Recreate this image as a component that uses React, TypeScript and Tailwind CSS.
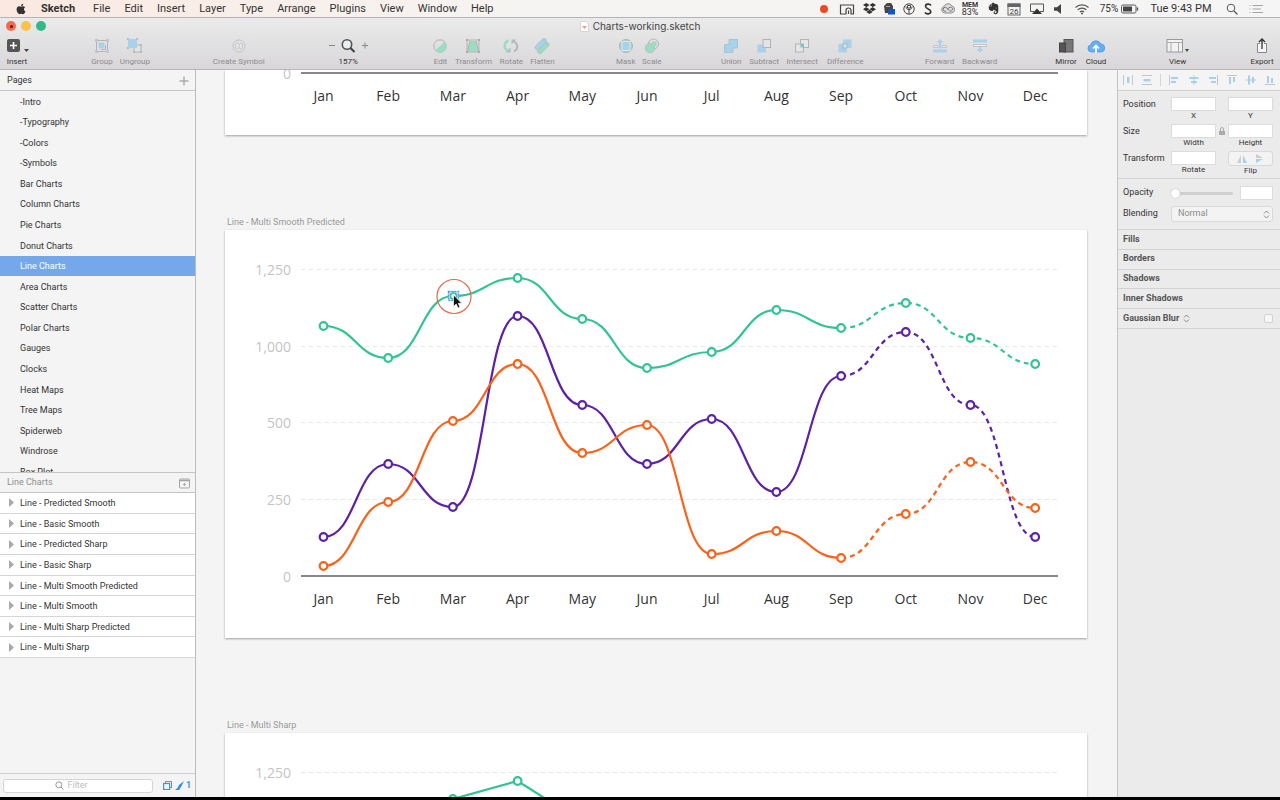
import { Fragment, type ReactNode } from "react";
import { FaApple, FaDropbox, FaEvernote } from "react-icons/fa";

const menus = ["File", "Edit", "Insert", "Layer", "Type", "Arrange", "Plugins", "View", "Window", "Help"];

const pages = [
  "-Intro", "-Typography", "-Colors", "-Symbols", "Bar Charts", "Column Charts", "Pie Charts",
  "Donut Charts", "Line Charts", "Area Charts", "Scatter Charts", "Polar Charts", "Gauges",
  "Clocks", "Heat Maps", "Tree Maps", "Spiderweb", "Windrose", "Box Plot",
];

const layers = [
  "Line - Predicted Smooth", "Line - Basic Smooth", "Line - Predicted Sharp", "Line - Basic Sharp",
  "Line - Multi Smooth Predicted", "Line - Multi Smooth", "Line - Multi Sharp Predicted", "Line - Multi Sharp",
];

const months = ["Jan", "Feb", "Mar", "Apr", "May", "Jun", "Jul", "Aug", "Sep", "Oct", "Nov", "Dec"];

const gridLines = [
  { label: "1,250", y: 40 },
  { label: "1,000", y: 117 },
  { label: "500", y: 193 },
  { label: "250", y: 270 },
];

const series = [
  { color: "#5b21a6", ys: [307, 234, 277, 86, 175, 234, 189, 262, 146, 102, 175, 307] },
  { color: "#fb6118", ys: [336, 272, 191, 134, 223, 195, 324, 301, 328, 284, 232, 278] },
  { color: "#30c493", ys: [96, 128, 66, 48, 89, 138, 122, 80, 98, 73, 108, 134] },
];

const monthX = (i: number) => 98.5 + i * 64.7;

// index of the last measured month, everything after it is predicted
const LAST = 8;

function linePath(ys: number[], from: number, to: number, smooth: boolean) {
  let d = `M${monthX(from)} ${ys[from]}`;
  for (let i = from + 1; i <= to; i++) {
    const mid = (monthX(i - 1) + monthX(i)) / 2;
    d += smooth
      ? ` C${mid} ${ys[i - 1]} ${mid} ${ys[i]} ${monthX(i)} ${ys[i]}`
      : ` L${monthX(i)} ${ys[i]}`;
  }
  return d;
}

type ChartProps = { smooth?: boolean; predicted?: boolean; children?: ReactNode };

function ChartAxis() {
  return (
    <>
      <text x="66" y="352" textAnchor="end" fill="#c4c4c4">0</text>
      <line x1="76" x2="833" y1="346" y2="346" stroke="#625f63" strokeWidth="1.6" />
      {months.map((m, i) => (
        <text key={m} x={monthX(i)} y="374" textAnchor="middle" fill="#333">{m}</text>
      ))}
    </>
  );
}

function LineChart({ smooth = false, predicted = false, children }: ChartProps) {
  const solidEnd = predicted ? LAST : 11;
  return (
    <svg viewBox="0 0 862 408" className="block h-auto w-full shrink-0 bg-white font-['Open_Sans',sans-serif] text-[14px] shadow-[0_1px_2px_rgba(0,0,0,0.35)]">
      {gridLines.map((g) => (
        <Fragment key={g.label}>
          <text x="66" y={g.y + 5} textAnchor="end" fill="#c4c4c4">{g.label}</text>
          <line x1="76" x2="833" y1={g.y - 0.5} y2={g.y - 0.5} stroke="#e8e8e8" strokeDasharray="4 4" />
        </Fragment>
      ))}
      <ChartAxis />
      {series.map((s) => (
        <g key={s.color} fill="none" stroke={s.color} strokeWidth="2.2">
          <path d={linePath(s.ys, 0, solidEnd, smooth)} />
          {predicted && <path d={linePath(s.ys, LAST, 11, smooth)} strokeDasharray="5 4" />}
          {s.ys.map((y, i) => <circle key={i} cx={monthX(i)} cy={y} r="3.8" fill="#fff" />)}
        </g>
      ))}
      {children}
    </svg>
  );
}

function Icon({ children, w = 16 }: { children: ReactNode; w?: number }) {
  return (
    <svg width={w} height="16" viewBox={`0 0 ${w} 16`} fill="none" aria-hidden="true" className="shrink-0">
      {children}
    </svg>
  );
}

function Tool({ label, icon, width, dark = false }: { label: string; icon: ReactNode; width: string; dark?: boolean }) {
  return (
    <button className={`flex shrink-0 flex-col items-center gap-[3px] whitespace-nowrap ${width} ${dark ? "text-[#333]" : "text-[#8d8b8d]"}`}>
      {icon}
      <span className="leading-[10px]">{label}</span>
    </button>
  );
}

const NarrowSpacer = () => <div className="flex-[1_1_47px]" />;
const Spacer = () => <div className="flex-[1_1_52px]" />;
const WideSpacer = () => <div className="flex-[1_1_58px]" />;

function MenuBar() {
  return (
    <nav className="flex h-[18px] shrink-0 items-center border-b border-[#b5b3b5] bg-linear-to-r from-[#fbe9e1] via-[#f6f4f2] via-40% to-[#f5f5f5] text-[11px] text-[#333]">
      <div className="flex items-center gap-3.5 pt-px pl-[15px] leading-4">
        <FaApple className="size-3" />
        <a href="#" className="mr-1 font-bold">Sketch</a>
        {menus.map((m) => <a key={m} href="#">{m}</a>)}
      </div>
      <div className="ml-auto flex items-center pr-[11px] leading-4 *:flex *:shrink-0 *:justify-center">
        <div className="w-[22px]"><i className="size-2 rounded-full bg-[#f2481d]" /></div>
        <div className="w-6">
          <Icon><path d="M4.500 13H1.500V4h13v9h-2.500V9.500a2.500 2.500 0 0 0-5 0V13H4.500M9.500 13V9.500" stroke="#444" strokeWidth="1.200" /></Icon>
        </div>
        <div className="w-5"><FaDropbox className="size-[13px]" /></div>
        <div className="w-5">
          <Icon>
            <path d="M3 5l3-3h4l2 3v7H4z" fill="#444" />
            <path d="M5 5.500h4" stroke="#aaa" />
            <rect x="7" y="8" width="7" height="5.500" fill="#1155c4" />
          </Icon>
        </div>
        <div className="w-5">
          <Icon>
            <circle cx="8" cy="8" r="5.200" stroke="#444" />
            <path d="M8 13V8M5 5.500c0 2 1.200 3 3 3s3-1 3-3M6.500 4.500h3v2.500h-3z" stroke="#444" />
          </Icon>
        </div>
        <div className="w-[18px]">
          <Icon><path d="M11 4.500C10 2.500 5.500 2.500 5.500 5.300c0 3 5.300 2.200 5.300 5.200 0 3-4.800 3-5.800.800" stroke="#333" strokeWidth="1.600" /></Icon>
        </div>
        <div className="w-[22px]">
          <Icon>
            <path d="M4.500 12A3.500 3.500 0 0 1 4 5.300 4.500 4.500 0 0 1 12 5a3.600 3.600 0 0 1-.500 7z" stroke="#8a8a8a" fill="#ddd" />
            <path d="M9.500 9.500 6.500 6.800a2 2 0 1 0-.300 3.200M7.500 8l1.500-1.200a2 2 0 1 1 .800 3.200" stroke="#777" />
          </Icon>
        </div>
        <div className="w-[22px] flex-col items-center text-[9px] leading-[7px]">
          <span className="text-[7px] leading-[7px] font-bold">MEM</span>
          <span>83%</span>
        </div>
        <div className="w-6"><FaEvernote className="size-[13px]" /></div>
        <div className="w-[18px]">
          <Icon>
            <rect x="2" y="3" width="12" height="11" stroke="#666" fill="#f3f3f3" />
            <path d="M1.500 2.500h13V6h-13z" fill="#666" />
            <text x="8" y="13" textAnchor="middle" fontSize="8" fill="#444">26</text>
          </Icon>
        </div>
        <div className="w-7">
          <Icon>
            <path d="M5 10.500H1.500V3h13v7.500H11" stroke="#555" />
            <path d="m8 7.500 5 5.500H3z" fill="#333" />
          </Icon>
        </div>
        <div className="w-3.5"><Icon><path d="M4 6.200h3L11 3v10L7 9.800H4z" fill="#444" /></Icon></div>
        <div className="w-[34px]">
          <Icon>
            <path d="M1.500 6.500a9.500 9.500 0 0 1 13 0M3.700 8.800a6.300 6.300 0 0 1 8.600 0M5.900 11a3.200 3.200 0 0 1 4.200 0" stroke="#555" strokeWidth="1.200" />
            <circle cx="8" cy="12.500" r="1" fill="#555" />
          </Icon>
        </div>
        <span className="w-5 pt-px text-[10px]">75%</span>
        <div className="w-[22px]">
          <Icon w={18}>
            <rect x="0.500" y="4" width="14.500" height="8" rx="1.500" stroke="#555" />
            <path d="M2 5.500h9v5H2z" fill="#444" />
            <path d="M16.500 6.500v3" stroke="#555" strokeWidth="1.300" />
          </Icon>
        </div>
        <span className="w-20 pt-px">Tue 9:43 PM</span>
        <div className="w-[22px]">
          <Icon><circle cx="7" cy="7" r="3.800" stroke="#555" /><path d="m10 10 3.500 3.500" stroke="#555" strokeWidth="1.200" /></Icon>
        </div>
        <div className="w-[26px]">
          <Icon><path d="M4.500 4.500H15M4.500 8H13M4.500 11.500H15M1.500 4.500h1M1.500 8h1M1.500 11.500h1" stroke="#a5a5a5" /></Icon>
        </div>
      </div>
    </nav>
  );
}

const BLUE = "#a9d1ea";
const GREEN = "#9bdcc2";
const EDGE = "#b4b2b4";

function Toolbar() {
  return (
    <div className="flex h-[34px] shrink-0 items-start border-b border-[#b9b7b9] pt-0.5 text-[8px]">
      <Tool dark width="w-[34px]" label="Insert" icon={
        <Icon w={28}>
          <rect x="4" y="1" width="13" height="13" rx="2" fill="#555" />
          <path d="M10.500 4v7M7 7.500h7" stroke="#fff" strokeWidth="1.600" />
          <path d="m21 11 2.500 3 2.500-3z" fill="#444" />
        </Icon>
      } />
      <Spacer />
      <Tool width="w-[33px]" label="Group" icon={
        <Icon>
          <rect x="2.500" y="2.500" width="11" height="11" stroke={EDGE} fill="#e4e2e4" />
          <rect x="4.500" y="4.500" width="6" height="6" fill={BLUE} />
          <path d="M11.500 7v4.500H7" stroke={EDGE} />
          <path d="M1 1h3v3H1zM12 1h3v3h-3zM1 12h3v3H1zM12 12h3v3h-3z" fill="#c7c5c7" />
        </Icon>
      } />
      <Tool width="w-[33px]" label="Ungroup" icon={
        <Icon>
          <path d="M7 7h7v7H7z" stroke={EDGE} fill="#e4e2e4" />
          <path d="M0 0h2v2H0zM9 0h2v2H9zM0 9h2v2H0zM13 6h2v2h-2zM6 13h2v2H6zM13 13h2v2h-2z" fill="#b5b9bd" />
          <rect x="1" y="1" width="9" height="9" fill={BLUE} />
        </Icon>
      } />
      <WideSpacer />
      <Tool width="w-[60px]" label="Create Symbol" icon={
        <Icon>
          <circle cx="8" cy="8" r="6" stroke="#c2c0c2" fill="#e6e4e6" />
          <path d="M7 4.500a3.600 3.600 0 0 0 0 7M9 4.500a3.600 3.600 0 0 1 0 7M8 5v6" stroke="#c2c0c2" />
        </Icon>
      } />
      <WideSpacer />
      <Tool dark width="w-11" label="157%" icon={
        <Icon w={42}>
          <path d="M2 7.500h6M35 7.500h6M38 4.500v6" stroke="#888" />
          <circle cx="20" cy="6.500" r="4.700" stroke="#555" strokeWidth="1.600" fill="#eceff1" />
          <path d="m23.500 10 4 4" stroke="#444" strokeWidth="2.200" />
        </Icon>
      } />
      <WideSpacer />
      <Tool width="w-[26px]" label="Edit" icon={
        <Icon>
          <circle cx="8" cy="8" r="6.200" stroke={EDGE} />
          <path d="M12.700 3.300A6.500 6.500 0 1 1 3.300 12.700z" fill={GREEN} />
        </Icon>
      } />
      <Tool width="w-10" label="Transform" icon={
        <Icon>
          <path d="M4.500 3h7L14 13.500H2z" fill={GREEN} />
          <path d="M2 2v12h12V2z M5 3 2.500 13M11 3l2.500 10" stroke={EDGE} />
          <path d="M1 1h2v2H1zM13 1h2v2h-2zM1 13h2v2H1zM13 13h2v2h-2z" fill="#a9adab" />
        </Icon>
      } />
      <Tool width="w-9" label="Rotate" icon={
        <Icon w={18}>
          <path d="M6.500 2.500C1.500 4.500 1.500 10 5.500 12.500" stroke={GREEN} strokeWidth="2.500" />
          <path d="M11.500 3.500c5 2 5 7.500.500 10" stroke={EDGE} strokeWidth="1.800" />
          <path d="M3.500 14.500h5v-5zM14.500 1.500h-5v5z" fill="#aac2b8" />
        </Icon>
      } />
      <Tool width="w-[26px]" label="Flatten" icon={
        <Icon>
          <g transform="rotate(-45 8 8)">
            <rect x="1.500" y="3.500" width="14" height="4.500" rx="2.200" fill={BLUE} stroke="#a9bcc4" strokeWidth="0.700" />
            <rect x="0.500" y="8" width="14" height="4.500" rx="2.200" fill={GREEN} stroke="#a9bcb4" strokeWidth="0.700" />
          </g>
        </Icon>
      } />
      <WideSpacer />
      <Tool width="w-[26px]" label="Mask" icon={
        <Icon>
          <circle cx="8" cy="8" r="6.500" fill={GREEN} stroke={EDGE} />
          <rect x="4" y="3.500" width="8" height="9" fill={BLUE} stroke="#dce7ee" />
        </Icon>
      } />
      <Tool width="w-[26px]" label="Scale" icon={
        <Icon>
          <circle cx="9.500" cy="6" r="5" stroke={EDGE} />
          <circle cx="6" cy="10" r="4.800" fill={GREEN} stroke={EDGE} strokeWidth="0.600" />
          <path d="M5 11 11 5M8 4.500h3.500V8" stroke={GREEN} strokeWidth="2" />
        </Icon>
      } />
      <Spacer />
      <Tool width="w-[30px]" label="Union" icon={
        <Icon><path d="M1.500 6.500H6v-5h8.500V10H10v4.500H1.500z" fill={BLUE} stroke="#9cbfd4" strokeWidth="0.800" /></Icon>
      } />
      <Tool width="w-9" label="Subtract" icon={
        <Icon>
          <path d="M1.500 6.500H7v3.500h3v4.500H1.500z" fill={BLUE} />
          <rect x="7" y="1.500" width="7.500" height="8" fill="#e4e4e6" stroke={EDGE} />
        </Icon>
      } />
      <Tool width="w-10" label="Intersect" icon={
        <Icon>
          <rect x="6.500" y="1.500" width="8" height="8" fill="#e6e6e6" stroke={EDGE} />
          <rect x="1.500" y="6" width="8" height="8" fill="#e6e6e6" stroke={EDGE} />
          <rect x="6.500" y="6" width="3.500" height="3.500" fill="#7ebfd0" />
        </Icon>
      } />
      <Tool width="w-[46px]" label="Difference" icon={
        <Icon>
          <rect x="6" y="1.500" width="8.500" height="8.500" fill={BLUE} />
          <rect x="1.500" y="6" width="8.500" height="8.500" fill={BLUE} />
          <rect x="6" y="6" width="4" height="4" fill="#e0e4e6" stroke="#9dbccb" />
        </Icon>
      } />
      <Spacer />
      <Tool width="w-10" label="Forward" icon={
        <Icon>
          <path d="M8 1 4.500 4.500H7v6h2v-6h2.500z" fill={BLUE} />
          <path d="M1.500 7.500H6v2H1.500zM10 7.500h4.500v2H10z" fill="#f0f0f0" stroke={EDGE} strokeWidth="0.700" />
          <path d="M1 11.500h14v3H1z" fill={BLUE} />
        </Icon>
      } />
      <Tool width="w-10" label="Backward" icon={
        <Icon>
          <path d="M1 1.500h14v3H1z" fill={BLUE} />
          <path d="M1.500 6.500h13v2h-13z" fill="#f0f0f0" stroke={EDGE} strokeWidth="0.700" />
          <path d="M8 14.500 4.500 11H7V9h2v2h2.500z" fill={BLUE} />
        </Icon>
      } />
      <Spacer />
      <Tool dark width="w-[30px]" label="Mirror" icon={
        <Icon>
          <rect x="6" y="1.500" width="9" height="12.500" fill="#777" stroke="#555" />
          <rect x="1.500" y="5" width="6" height="9" fill="#555" stroke="#444" />
        </Icon>
      } />
      <Tool dark width="w-[30px]" label="Cloud" icon={
        <Icon w={18}>
          <path d="M4.500 14a3.700 3.700 0 0 1-.700-7.300A5.300 5.300 0 0 1 13.800 6 4 4 0 0 1 13.500 14z" fill="#64aff6" stroke="#4c8fe0" strokeWidth="0.700" />
          <path d="M9 15V8M6 10.500l3-3 3 3" stroke="#fff" strokeWidth="1.700" />
        </Icon>
      } />
      <NarrowSpacer />
      <Tool dark width="w-10" label="View" icon={
        <Icon w={24}>
          <rect x="1" y="1.500" width="15.500" height="12.500" fill="#f2f2f2" stroke="#999" />
          <path d="M1 4.500h15.500M5 4.500V14M12.500 4.500V14" stroke="#aaa" />
          <path d="m19 11 2 3 2-3z" fill="#444" />
        </Icon>
      } />
      <NarrowSpacer />
      <Tool dark width="w-9" label="Export" icon={
        <Icon>
          <path d="M6 5.500H3.500v9h9v-9H10" fill="#f5f5f5" stroke="#888" />
          <path d="M8 11V1M5 4l3-3 3 3" stroke="#333" strokeWidth="1.300" />
        </Icon>
      } />
    </div>
  );
}

function Sidebar() {
  return (
    <aside className="flex w-[196px] shrink-0 flex-col border-r border-[#bcbcbc] bg-[#f4f4f4] text-[9px] text-[#333]">
      <header className="flex h-[21px] shrink-0 items-center justify-between border-b border-[#c8c8c8] pt-px pr-[6px] pl-[7px]">
        <h2>Pages</h2>
        <button aria-label="Add page">
          <svg width="10" height="10" className="block"><path d="M5 0.500v9M0.500 5h9" stroke="#aaa" strokeWidth="1.400" /></svg>
        </button>
      </header>
      <div className="h-[381px] overflow-hidden">
        <ul className="grid h-[391px] auto-rows-fr">
          {pages.map((p) => (
            <li key={p} className={`flex items-center pt-0.5 pl-5 ${p === "Line Charts" ? "bg-[#74a8ea] text-white" : ""}`}>{p}</li>
          ))}
        </ul>
      </div>
      <header className="flex h-[21px] shrink-0 items-center justify-between border-y border-[#c4c4c4] pt-px pr-[5px] pl-[7px] text-[#8f8f8f]">
        <h2>Line Charts</h2>
        <button aria-label="Collapse layers">
          <svg width="11" height="11" className="block" fill="none">
            <rect x="0.500" y="1" width="10" height="9" rx="1" stroke="#a5a5a5" />
            <path d="M0.500 2.500h10" stroke="#a5a5a5" strokeWidth="1.500" />
            <path d="M5.500 5v3M4 6.500h3" stroke="#aaa" />
          </svg>
        </button>
      </header>
      <ul className="grid h-[165px] shrink-0 auto-rows-fr bg-white">
        {layers.map((l) => (
          <li key={l} className="flex items-center gap-1.5 border-b border-[#d6d6d6] pt-0.5 pl-[9px]">
            <svg width="5" height="9" className="mb-0.5"><path d="M0 0v9l5-4.500z" fill="#a9a9a9" /></svg>
            {l}
          </li>
        ))}
      </ul>
      <footer className="mt-auto flex h-6 shrink-0 items-center border-t border-[#cfcfcf] pl-[3px]">
        <label className="flex h-[14px] w-[150px] items-center justify-center gap-1 rounded-[3px] border border-[#d5d5d5] bg-white">
          <svg width="9" height="9" fill="none"><circle cx="3.800" cy="3.800" r="3" stroke="#999" /><path d="m6 6 2.500 2.500" stroke="#999" /></svg>
          <input aria-label="Filter layers" placeholder="Filter" className="w-[34px] text-[9px] outline-none placeholder:text-[#bdbdbd]" />
        </label>
        <button aria-label="Show slices" className="ml-2.5">
          <svg width="9" height="9" fill="none" className="block">
            <path d="M2.500 2V.600h6v6H7" stroke="#3d96ea" />
            <rect x="0.600" y="2.500" width="6" height="6" stroke="#3d96ea" strokeWidth="1.200" />
          </svg>
        </button>
        <button className="ml-[3px] flex items-center gap-0.5 text-[9px] font-bold text-[#3d96ea]">
          <svg width="9" height="9"><path d="M9 0 4 4 2.500 7 0 9h4l2-3z" fill="#2f8eea" /></svg>
          1
        </button>
      </footer>
    </aside>
  );
}

const Artboard = ({ title, children }: { title: string; children: ReactNode }) => (
  <section className="shrink-0">
    <h3 className="mb-0.5 pl-0.5 text-[9px] leading-[12px] text-[#999]">{title}</h3>
    {children}
  </section>
);

function Canvas() {
  return (
    <main className="flex min-w-0 flex-1 flex-col overflow-hidden bg-[#f4f4f4] pr-[30px] pl-[29px]">
      {/* only the foot of the first artboard is scrolled into view */}
      <svg viewBox="0 343 862 65" className="block h-auto w-full shrink-0 bg-white font-['Open_Sans',sans-serif] text-[14px] shadow-[0_1px_2px_rgba(0,0,0,0.35)]">
        <ChartAxis />
      </svg>
      <div className="flex flex-col gap-[81px] pt-[81px]">
        <Artboard title="Line - Multi Smooth Predicted">
          <LineChart smooth predicted>
            <rect x="223.500" y="61.500" width="10" height="9" fill="#cfe4fb" stroke="#4f9bf0" strokeWidth="1.500" strokeDasharray="2 1" />
            <circle cx="228.500" cy="66" r="3" fill="#fff" stroke="#30c493" strokeWidth="1.500" />
            <circle cx="229" cy="66.500" r="17" fill="none" stroke="#e2694d" strokeWidth="1.200" />
            <path d="M228.500 65v11.500l2.700-2.500 1.800 4 2-1-1.800-3.700h3.600z" fill="#111" stroke="#fff" strokeWidth="0.700" />
          </LineChart>
        </Artboard>
        <Artboard title="Line - Multi Sharp">
          <LineChart />
        </Artboard>
      </div>
    </main>
  );
}

// alignment glyphs: grey guide line plus blue bars
const alignIcons = [
  { name: "Distribute horizontally", line: "M1.500 1v10M10.500 1v10", bar: "M5 3h2.500v6H5z" },
  { name: "Distribute vertically", line: "M1 1.500h10M1 10.500h10", bar: "M2.500 5h7v2.500h-7z" },
  { name: "Align left", line: "M1.500 1v10", bar: "M3 3h7v2H3zM3 7h5v2H3z" },
  { name: "Align center", line: "M6 1v10", bar: "M1.500 3h9v2h-9zM3 7h6v2H3z" },
  { name: "Align right", line: "M10.500 1v10", bar: "M2 3h7v2H2zM4 7h5v2H4z" },
  { name: "Align top", line: "M1 1.500h10", bar: "M3 3h2v7H3zM7 3h2v5H7z" },
  { name: "Align middle", line: "M1 6h10", bar: "M3 1.500h2v9H3zM7 3h2v6H7z" },
  { name: "Align bottom", line: "M1 10.500h10", bar: "M3 2h2v7H3zM7 4h2v5H7z" },
];

function Field({ label }: { label: string }) {
  return (
    <label className="flex flex-col items-center text-[8px] leading-[10px]">
      <input className="h-[14px] w-full border border-[#dcdcdc] bg-white px-1 outline-none" />
      {label}
    </label>
  );
}

const Stepper = () => (
  <svg width="7" height="9" fill="none" className="shrink-0">
    <path d="m1 3.500 2.500-2.500L6 3.500M1 5.500 3.500 8 6 5.500" stroke="#888" />
  </svg>
);

function Inspector() {
  return (
    <aside className="w-[163px] shrink-0 border-l border-[#c4c4c4] bg-[#ebebeb] text-[9px] text-[#333]">
      <div className="flex h-[21px] items-center justify-between border-b border-[#cfcfcf] bg-[#f4f4f4] px-1">
        {alignIcons.map((a, i) => (
          <Fragment key={a.name}>
            {i === 2 && <i className="h-3 w-px bg-[#d5d5d5]" />}
            <button aria-label={a.name}>
              <svg width="12" height="12" className="block">
                <path d={a.line} stroke="#c2c6c9" />
                <path d={a.bar} fill="#a6d0ec" />
              </svg>
            </button>
          </Fragment>
        ))}
      </div>
      <div className="flex flex-col gap-[3px] border-b border-[#d2d2d2] pt-1.5 pr-[7px] pb-0.5 pl-[5px] *:grid *:grid-cols-[48px_1fr_12px_1fr] *:leading-[15px]">
        <div>
          <span>Position</span>
          <Field label="X" />
          <span />
          <Field label="Y" />
        </div>
        <div>
          <span>Size</span>
          <Field label="Width" />
          <button aria-label="Lock proportions" className="flex h-[14px] items-center justify-center">
            <svg width="6" height="8" fill="none"><path d="M1.500 4V2a1.500 1.500 0 0 1 3 0v2" stroke="#aaa" /><path d="M0 4h6v4H0z" fill="#aaa" /></svg>
          </button>
          <Field label="Height" />
        </div>
        <div>
          <span>Transform</span>
          <Field label="Rotate" />
          <span />
          <div className="flex flex-col items-center text-[8px] leading-[10px]">
            <div className="flex h-[15px] w-full items-center justify-evenly rounded-[3px] border border-[#d8d8d8] bg-[#f3f3f3]">
              <button aria-label="Flip horizontally">
                <svg width="10" height="8" className="block"><path d="M4 0v8H0z" fill="#cdcdcd" /><path d="M6 0v8h4z" fill="#a6d0ec" /></svg>
              </button>
              <button aria-label="Flip vertically">
                <svg width="9" height="9" className="block"><path d="M1 0v4h7z" fill="#cdcdcd" /><path d="M1 9V5h7z" fill="#a6d0ec" /></svg>
              </button>
            </div>
            Flip
          </div>
        </div>
      </div>
      <div className="flex flex-col gap-1.5 border-b border-[#d2d2d2] pt-[7px] pr-[7px] pb-[7px] pl-[5px]">
        <div className="flex h-[14px] items-center">
          <label htmlFor="opacity" className="w-12">Opacity</label>
          <input id="opacity" type="range" defaultValue="0" className="h-3 w-[62px] appearance-none bg-transparent [&::-webkit-slider-runnable-track]:h-[3px] [&::-webkit-slider-runnable-track]:rounded-full [&::-webkit-slider-runnable-track]:bg-[#d0d0d0] [&::-webkit-slider-thumb]:mt-[-3px] [&::-webkit-slider-thumb]:size-[9px] [&::-webkit-slider-thumb]:appearance-none [&::-webkit-slider-thumb]:rounded-full [&::-webkit-slider-thumb]:bg-white [&::-webkit-slider-thumb]:shadow-[0_0_1px_rgba(0,0,0,0.4)]" />
          <input aria-label="Opacity value" className="ml-auto h-[14px] w-[33px] border border-[#dcdcdc] bg-white px-1" />
        </div>
        <div className="flex h-4 items-center">
          <label htmlFor="blending" className="w-12">Blending</label>
          <div className="flex h-4 flex-1 items-center rounded-[3px] border border-[#d9d9d9] bg-[#f3f3f3] pr-0.5 pl-1.5">
            <select id="blending" className="flex-1 appearance-none text-[#8c8c8c]">
              <option>Normal</option>
            </select>
            <Stepper />
          </div>
        </div>
      </div>
      <div className="grid h-[99px] auto-rows-fr font-bold text-[#555] *:flex *:items-center *:border-b *:border-[#d2d2d2] *:pl-[5px]">
        <h3>Fills</h3>
        <h3>Borders</h3>
        <h3>Shadows</h3>
        <h3>Inner Shadows</h3>
        <label className="gap-1 pr-[7px]">
          Gaussian Blur
          <Stepper />
          <input type="checkbox" className="ml-auto size-[9px] appearance-none rounded-[2px] border border-[#d2d2d2] bg-[#f6f6f6]" />
        </label>
      </div>
    </aside>
  );
}

function App() {
  return (
    <div className="flex h-screen flex-col overflow-hidden border-b-[3px] border-black bg-[#f4f4f4] font-[Roboto,sans-serif]">
      <MenuBar />
      <div className="flex shrink-0 flex-col bg-linear-to-b from-[#ebebeb] to-[#d8d6d9]">
        <div className="flex h-[18px] items-center justify-between px-1.5 pb-0.5 text-[#444]">
          <div className="flex w-20 gap-[5px]">
            <button aria-label="Close" className="flex size-[10px] items-center justify-center rounded-full bg-[#f26b50]"><i className="size-[3px] rounded-full bg-[#5c1b10]" /></button>
            <button aria-label="Minimize" className="size-[10px] rounded-full bg-[#fbc14a]" />
            <button aria-label="Zoom" className="size-[10px] rounded-full bg-[#33b888]" />
          </div>
          <h1 className="flex items-center gap-1 font-[Inter,sans-serif] text-[10px]">
            <svg width="9" height="11"><path d="M.500.500h5.500l2.500 2.500v7.500h-8z" fill="#fff" stroke="#d6d6d6" /><path d="M2 5h5L4.500 8z" fill="#f39a7c" /></svg>
            Charts-working.sketch
          </h1>
          <div className="w-20" />
        </div>
        <Toolbar />
      </div>
      <div className="flex min-h-0 flex-1">
        <Sidebar />
        <Canvas />
        <Inspector />
      </div>
    </div>
  );
}

export default App;
